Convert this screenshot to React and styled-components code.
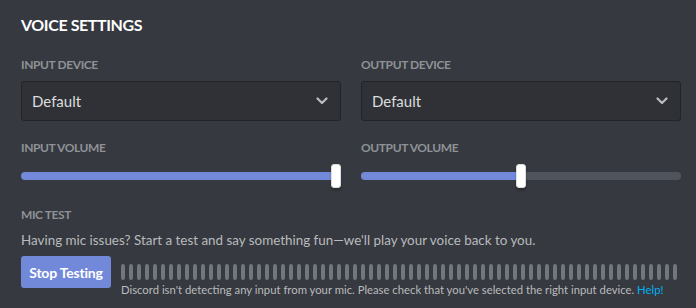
import React from "react";
import styled, { createGlobalStyle } from "styled-components";

const GlobalStyle = createGlobalStyle`
  html, body {
    margin: 0;
    padding: 0;
    background: #36393f;
  }
  body {
    font-family: Lato, "Noto Sans", "Liberation Sans", sans-serif;
    -webkit-font-smoothing: antialiased;
  }
`;

const Page = styled.div`
  width: 696px;
  height: 308px;
  box-sizing: border-box;
  padding: 15px 15px 0 21px;
  background: #36393f;
  overflow: hidden;
`;

const Title = styled.h2`
  margin: 0 0 22px;
  font-size: 16px;
  line-height: 20px;
  font-weight: 700;
  letter-spacing: -0.4px;
  color: #ffffff;
  text-transform: uppercase;
`;

const Columns = styled.div`
  display: grid;
  grid-template-columns: 320px 320px;
  column-gap: 20px;
  margin-bottom: ${p => p.$spacing || 0}px;
`;

const Field = styled.div`
  display: flex;
  flex-direction: column;
`;

const Label = styled.h5`
  margin: 0 0 8px;
  font-size: 12px;
  line-height: 16px;
  font-weight: 700;
  letter-spacing: -0.4px;
  color: #8e9297;
  text-transform: uppercase;
`;

const Select = styled.div`
  height: 40px;
  box-sizing: border-box;
  display: flex;
  align-items: center;
  justify-content: space-between;
  padding: 0 12px 0 10px;
  background: #2f3136;
  border: 1px solid #222428;
  border-radius: 3px;
  color: #dcddde;
  font-size: 15px;
`;

const Chevron = () => (
  <svg width="12" height="8" viewBox="0 0 12 8">
    <path d="M1.5 1.5 L6 6 L10.5 1.5" fill="none" stroke="#b9bbbe" strokeWidth="2.2" strokeLinecap="round" strokeLinejoin="round" />
  </svg>
);

const SliderWrap = styled.div`
  position: relative;
  height: 24px;
  display: flex;
  align-items: center;
`;

const Track = styled.div`
  width: 100%;
  height: 8px;
  border-radius: 4px;
  background: #4f545c;
  overflow: hidden;
`;

const Fill = styled.div`
  height: 100%;
  background: #7289da;
`;

const Grabber = styled.div`
  position: absolute;
  top: 0;
  width: 10px;
  height: 24px;
  border-radius: 3px;
  background: #ffffff;
  border: 1px solid #dcddde;
  box-sizing: border-box;
  box-shadow: 0 3px 1px 0 rgba(0, 0, 0, 0.05), 0 2px 2px 0 rgba(0, 0, 0, 0.1), 0 3px 3px 0 rgba(0, 0, 0, 0.05);
`;

const Slider = ({ value }) => (
  <SliderWrap>
    <Track>
      <Fill style={{ width: `${value}%` }} />
    </Track>
    <Grabber style={{ left: `min(calc(${value}% - 5px), calc(100% - 10px))` }} />
  </SliderWrap>
);

const MicSection = styled.section`
  display: flex;
  flex-direction: column;
`;

const Description = styled.p`
  margin: 0 0 7px;
  font-size: 13.4px;
  line-height: 18px;
  color: #b9bbbe;
`;

const TestRow = styled.div`
  display: flex;
  align-items: flex-start;
  gap: 10px;
`;

const Button = styled.button`
  width: 90px;
  height: 32px;
  border: none;
  border-radius: 3px;
  background: #7289da;
  color: #ffffff;
  font-family: inherit;
  font-size: 14px;
  font-weight: 700;
  letter-spacing: -0.2px;
  padding: 0;
  cursor: pointer;
`;

const Meter = styled.div`
  display: flex;
  flex-direction: column;
  padding-top: 8px;
`;

const Bars = styled.div`
  display: flex;
  gap: 4px;
  height: 16px;
`;

const Bar = styled.span`
  width: 4px;
  height: 100%;
  border-radius: 2px;
  background: #72767d;
`;

const Note = styled.div`
  margin-top: 2px;
  font-size: 11.3px;
  line-height: 16px;
  color: #b9bbbe;
  white-space: nowrap;
`;

const HelpLink = styled.a`
  color: #00b0f4;
  text-decoration: none;
`;

export default function App() {
  return (
    <>
      <GlobalStyle />
      <Page>
        <Title>Voice Settings</Title>
        <Columns $spacing={19}>
          <Field>
            <Label>Input Device</Label>
            <Select>
              Default
              <Chevron />
            </Select>
          </Field>
          <Field>
            <Label>Output Device</Label>
            <Select>
              Default
              <Chevron />
            </Select>
          </Field>
        </Columns>
        <Columns $spacing={19}>
          <Field>
            <Label>Input Volume</Label>
            <Slider value={100} />
          </Field>
          <Field>
            <Label>Output Volume</Label>
            <Slider value={50} />
          </Field>
        </Columns>
        <MicSection>
          <Label>Mic Test</Label>
          <Description>
            Having mic issues? Start a test and say something fun—we'll play your voice back to you.
          </Description>
          <TestRow>
            <Button>Stop Testing</Button>
            <Meter>
              <Bars>
                {Array.from({ length: 70 }, (_, i) => (
                  <Bar key={i} />
                ))}
              </Bars>
              <Note>
                Discord isn't detecting any input from your mic. Please check that you've selected the right input device.{" "}
                <HelpLink href="#">Help!</HelpLink>
              </Note>
            </Meter>
          </TestRow>
        </MicSection>
      </Page>
    </>
  );
}
